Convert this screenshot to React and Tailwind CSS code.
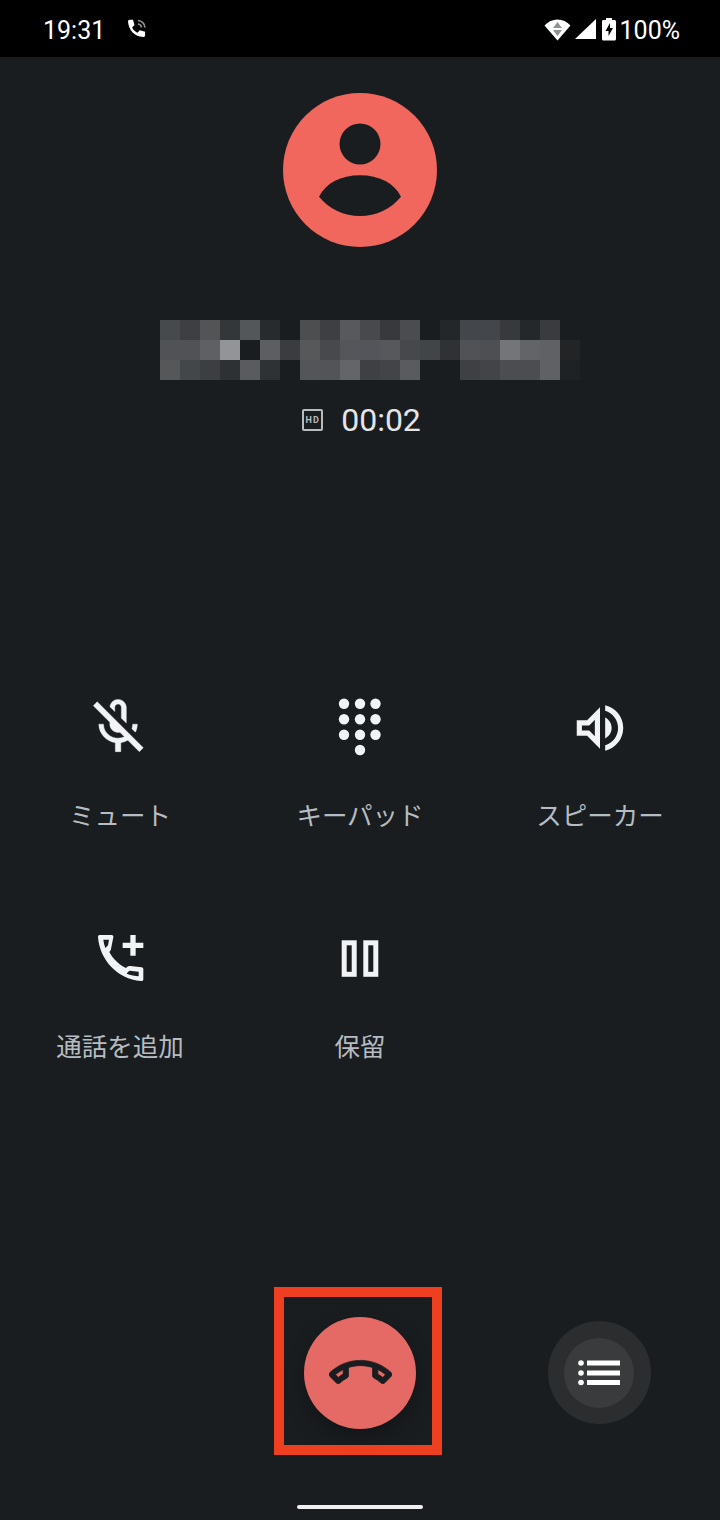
import React from 'react';

const BG = '#1a1d20';

// mosaic over the caller's name, one row of 21 cells per line
const mosaic = [
  ['#474a4d', '#3e3f42', '#525456', '#33373a', '#54575a', '#272b2e', BG, '#4c4e50', '#3e3f42', '#58595c', '#48494c', '#38393c', '#4b4c4f', BG, '#24272a', '#43464a', '#43464a', '#38393c', '#25282b', '#3a3b3e', BG],
  ['#505255', '#505255', '#5e6063', '#929497', BG, '#5c5e61', '#3b3c3f', '#56585a', '#48494c', '#54565a', '#53555a', '#56585b', '#46484b', '#414548', '#303134', '#505255', '#4d4f52', '#737578', '#626467', '#5f6164', '#232426'],
  ['#555759', '#43474a', '#3c3e41', '#2d3134', '#595b5e', '#2e3235', BG, '#535558', '#525457', '#636568', '#3f4043', '#434447', '#595b5e', BG, BG, '#3f4043', '#424447', '#4b4d50', '#4b4d50', '#5f6164', '#1f2224'],
];

function MicOffIcon() {
  return (
    <svg width="66" height="66" viewBox="0.7 0.4 24 24" fill="#f1f3f4" stroke="#f1f3f4" strokeWidth="0.15">
      <path d="M10.8 4.9c0-.66.54-1.2 1.2-1.2s1.2.54 1.2 1.2l-.01 3.91L15 10.6V5c0-1.66-1.34-3-3-3-1.54 0-2.79 1.16-2.96 2.65l1.76 1.76V4.9zM19 11h-1.7c0 .58-.1 1.13-.27 1.64l1.27 1.27c.44-.88.7-1.87.7-2.91zM4.41 2.86L3 4.27l6 6V11c0 1.66 1.34 3 3 3 .22 0 .44-.03.65-.08l1.66 1.66c-.71.33-1.5.52-2.31.52-2.76 0-5.3-2.1-5.3-5.1H5c0 3.41 2.72 6.23 6 6.72V21h2v-3.28c.91-.13 1.77-.45 2.55-.9l4.2 4.2 1.41-1.41L4.41 2.86z" />
    </svg>
  );
}

function DialpadIcon() {
  const dots = [];
  [-24.3, -8.7, 6.7].forEach((y) => {
    [-16, 0, 15.5].forEach((x) => dots.push([x, y]));
  });
  dots.push([0, 22]);
  return (
    <svg width="66" height="66" viewBox="-33 -33 66 66" fill="#f1f3f4">
      {dots.map(([x, y]) => (
        <circle key={`${x}-${y}`} cx={x} cy={y} r="5.2" />
      ))}
    </svg>
  );
}

function SpeakerIcon() {
  return (
    <svg width="62" height="62" viewBox="0 0 24 24" fill="#f1f3f4">
      <path d="M3 9v6h4l5 5V4L7 9H3zm7-.17v6.34L7.83 13H5v-2h2.83L10 8.83zM16.5 12c0-1.77-1.02-3.29-2.5-4.03v8.05c1.48-.73 2.5-2.25 2.5-4.02zM14 3.23v2.06c2.89.86 5 3.54 5 6.71s-2.11 5.85-5 6.71v2.06c4.01-.91 7-4.49 7-8.77 0-4.28-2.99-7.86-7-8.77z" />
    </svg>
  );
}

function AddCallIcon() {
  return (
    <svg width="66" height="66" viewBox="6 3 198 198" fill="#f1f3f4">
      <path
        fillRule="evenodd"
        d="M45 30H80C84 30 86 33 85 37L78 72C77 76 76 78 73 81C85 103 103 120 123 129C127 124 131 122 136 123L170 127C173 127 175 130 175 133V163C175 167 172 169 168 168C96 162 44 104 39 36C39 32 41 30 45 30zM55 44C56 53 58 61 61 69L69 61L72 44zM134 137C130 139 127 142 125 146C137 150 150 153 161 154V140z"
      />
      <path d="M136 30H152V53H175V69H152V92H136V69H113V53H136z" />
    </svg>
  );
}

function HoldIcon() {
  return (
    <svg width="66" height="66" viewBox="0 0 66 66" fill="none" stroke="#f1f3f4" strokeWidth="5">
      <rect x="17.200" y="16.800" width="10" height="31.500" />
      <rect x="38.800" y="16.800" width="10" height="31.500" />
    </svg>
  );
}

function HangUpIcon() {
  return (
    <svg width="63" height="63" viewBox="0 0 24 24" fill={BG} stroke={BG} strokeWidth="0.3">
      <path d="M18.59 10.52c1.05.51 2.04 1.15 2.96 1.91l-1.07 1.07c-.58-.47-1.21-.89-1.88-1.27v-1.71m-13.2 0v1.7c-.65.37-1.28.79-1.87 1.27l-1.07-1.07c.91-.75 1.9-1.38 2.94-1.9M12 7C7.46 7 3.34 8.78.29 11.67c-.18.18-.29.43-.29.71s.11.53.29.71l2.48 2.48c.18.18.43.29.71.29.27 0 .52-.11.7-.28.79-.74 1.69-1.36 2.66-1.85.33-.16.56-.5.56-.9v-3.1C8.85 9.25 10.4 9 12 9s3.15.25 4.59.73v3.1c0 .4.23.74.56.9.98.49 1.87 1.12 2.67 1.85.18.18.43.28.7.28.28 0 .53-.11.71-.29l2.48-2.48c.18-.18.29-.43.29-.71s-.11-.53-.29-.71C20.66 8.78 16.54 7 12 7z" />
    </svg>
  );
}

function StatusBar() {
  return (
    <div className="h-[57px] shrink-0 bg-black flex items-center pl-[43px] pr-[40px] text-white text-[25px] font-['Roboto',sans-serif]">
      <span className="mt-[4px]">19:31</span>
      <svg className="ml-[20px]" width="24" height="24" viewBox="0 0 24 24">
        <path fill="#fff" d="M3 4.500c0-1 .8-1.800 1.800-1.800h3.200l1.500 5.300-2.400 2.400c1.100 2.300 3 4.200 5.300 5.300l2.400-2.400 5.300 1.500v3.400c0 1-.8 1.800-1.800 1.800C9.600 19.700 3.700 13.200 3 4.500z" />
        <path fill="none" stroke="#8f9295" strokeWidth="1.600" d="M13 3.500a7.500 7.500 0 0 1 7 7M13 7a4 4 0 0 1 3.500 3.500" />
      </svg>
      <div className="ml-auto flex items-center">
        <svg width="27" height="24" viewBox="0 0 27 24">
          <path fill="#fff" d="M13.500 23.500 .5 8.500C4 4.500 8.500 2.500 13.500 2.500S23 4.500 26.500 8.500z" />
          <path fill="#8f9295" d="M13.500 5 18 11H9zM9 13h9l-4.500 6z" />
        </svg>
        <svg className="ml-[4px]" width="21" height="22" viewBox="0 0 21 22">
          <path fill="#fff" d="M21 1v20H0z" />
        </svg>
        <svg className="ml-[6px]" width="14" height="24" viewBox="0 0 14 24">
          <path fill="#fff" d="M4 3V1h6v2h2.500c.8 0 1.500.7 1.500 1.500V22c0 .8-.7 1.500-1.500 1.500h-11C.7 23.500 0 22.800 0 22V4.500C0 3.700.7 3 1.500 3z" />
          <path fill="#000" d="M8 6 3.500 14H6.500v5L11 11H8z" />
        </svg>
        <span className="ml-[4px] mt-[4px]">100%</span>
      </div>
    </div>
  );
}

function Action({ icon, label }) {
  return (
    <div className="flex flex-col items-center">
      <div className="h-[66px] flex items-center justify-center">{icon}</div>
      <div className="mt-[35px] h-[36px] leading-[36px] text-[25.5px] text-[#b6bcc1] font-['Noto_Sans_CJK_JP',sans-serif] font-normal">
        {label}
      </div>
    </div>
  );
}

export default function App() {
  return (
    <div className="w-[720px] h-[1520px] bg-[#1a1d20] flex flex-col overflow-hidden">
      <StatusBar />

      <div className="mt-[36px] mx-auto w-[154px] h-[154px] rounded-full bg-[#f1675e]">
        <svg width="154" height="154" viewBox="0 0 154 154" fill={BG}>
          <circle cx="77" cy="51" r="20.500" />
          <path d="M36 103.700C43 90 58 82.300 77 82.300S111 90 118 103.700C108 116 93 123 77 123S46 116 36 103.700z" />
        </svg>
      </div>

      <div className="mt-[73px] ml-[160px] w-[420px] grid grid-cols-[repeat(21,20px)] auto-rows-[20px]">
        {mosaic.flat().map((color, i) => (
          <div key={i} style={{ backgroundColor: color }} />
        ))}
      </div>

      <div className="mt-[20px] h-[40px] pl-[3px] flex items-center justify-center font-['Roboto',sans-serif]">
        <div className="w-[21px] h-[22px] mr-[18px] border-2 border-[#b9bcbf] rounded-[2px] flex items-center justify-center text-[9px] leading-none font-bold text-[#b9bcbf] tracking-[1px]">
          HD
        </div>
        <span className="text-[32px] text-[#e3e5e7]">00:02</span>
      </div>

      <div className="mt-[255px] grid grid-cols-3 gap-y-[94px]">
        <Action icon={<MicOffIcon />} label="ミュート" />
        <Action icon={<DialpadIcon />} label="キーパッド" />
        <Action icon={<SpeakerIcon />} label="スピーカー" />
        <Action icon={<AddCallIcon />} label="通話を追加" />
        <Action icon={<HoldIcon />} label="保留" />
      </div>

      <div className="mt-auto grid grid-cols-3 items-center">
        <div />
        <div className="relative flex justify-center">
          <div className="w-[112px] h-[112px] rounded-full bg-[#e56a66] shadow-[0_8px_20px_rgba(0,0,0,0.3)] flex items-center justify-center">
            <HangUpIcon />
          </div>
          {/* annotation frame drawn over the button */}
          <div className="absolute left-[34px] top-[-30px] w-[168px] h-[168px] border-[10px] border-[#ee4020]" />
        </div>
        <div className="flex justify-center pr-[2px] pb-[1px]">
          <div className="w-[103px] h-[103px] rounded-full bg-[#2b2d2f] flex items-center justify-center">
            <div className="w-[70px] h-[70px] rounded-full bg-[#3a3b3c] flex items-center justify-center">
              <svg width="42" height="26" viewBox="0 0 42 26" fill="#fff">
                <circle cx="3" cy="3" r="2.800" />
                <circle cx="3" cy="13" r="2.800" />
                <circle cx="3" cy="22.500" r="2.800" />
                <rect x="9" y="0.500" width="33" height="5" />
                <rect x="9" y="10.500" width="33" height="5" />
                <rect x="9" y="20" width="33" height="5" />
              </svg>
            </div>
          </div>
        </div>
      </div>

      <div className="mt-[76px] mb-[11px] mx-auto w-[126px] h-[4px] rounded-full bg-[#f0f0f0]" />
    </div>
  );
}
